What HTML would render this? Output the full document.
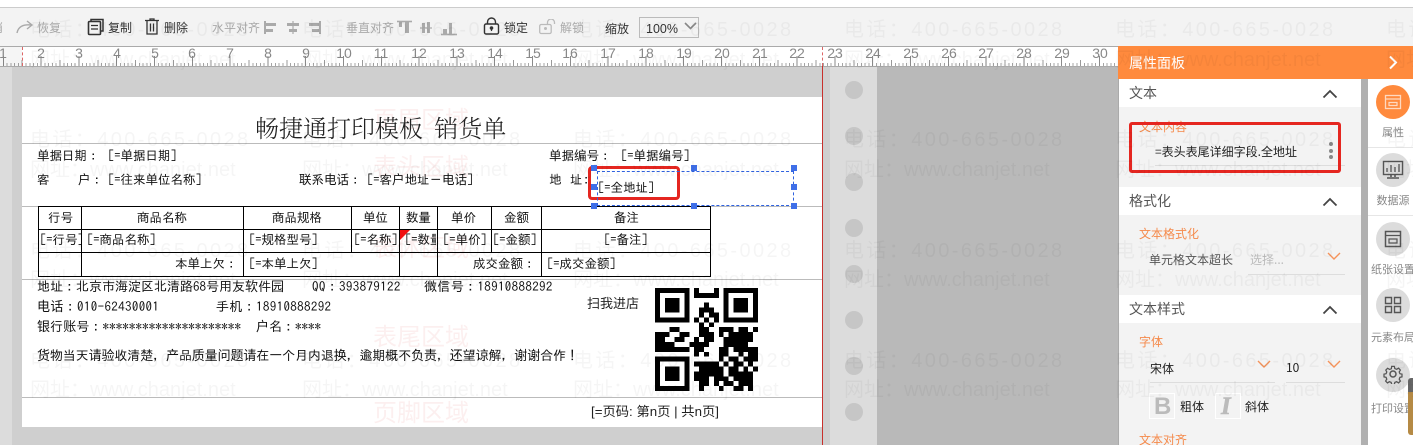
<!DOCTYPE html>
<html lang="zh"><head><meta charset="utf-8"><title>打印模板</title>
<style>
html,body{margin:0;padding:0;background:#fff}
#r{position:relative;width:1413px;height:445px;overflow:hidden;background:#fff;font-family:"Liberation Sans","Noto Sans CJK SC",sans-serif}
#r div,#r span.t,#r svg{position:absolute}
.t{position:absolute;white-space:pre;line-height:16px;font-size:12px}
.p{font-family:"IPAGothic","WenQuanYi Zen Hei","Noto Sans CJK SC",monospace;color:#111;font-size:12.5px}
.f{font-size:13px}
.d{letter-spacing:.35px}
.tb{font-size:12px;color:#333;font-family:"Noto Sans CJK SC",sans-serif}
.g{color:#aaa}
.n{font-size:14px;color:#888;width:24px;text-align:center;font-family:"Liberation Sans",sans-serif;top:45px}
.l{background:#bbb;height:1px;left:22px;width:800px}
.b{background:#000}
.h{background:#3f6fe8;width:6px;height:6px}
.w{font-size:20px;color:rgba(0,0,0,.04);letter-spacing:2.400px;line-height:24px;font-family:"Liberation Sans","Noto Sans CJK SC",sans-serif}
.s{letter-spacing:0}
.e{font-size:24px;color:rgba(215,50,50,.08);line-height:28px;font-family:"Noto Sans CJK SC",sans-serif}
.sh{font-size:14px;color:#555;font-family:"Noto Sans CJK SC",sans-serif}
.or{font-size:12px;color:#f58a4b;font-family:"Noto Sans CJK SC",sans-serif}
.pa{font-size:12px;color:#333;font-family:"Noto Sans CJK SC",sans-serif}
.sl{font-size:11px;color:#888;font-family:"Noto Sans CJK SC",sans-serif;text-align:center;width:60px;left:1363px}
.c{width:34px;height:34px;border-radius:50%;background:#dcdcdc;left:1376px}
</style></head><body><div id="r">

<div style="left:0;top:7px;width:1413px;height:1px;background:#ccc"></div>
<div style="left:0;top:8px;width:1413px;height:38px;background:#f3f3f3"></div>
<div style="left:0;top:46px;width:1118px;height:1px;background:#aaa"></div>

<span class="t tb g" style="left:-9px;top:20px">消</span>
<svg style="left:16px;top:20px" width="18" height="14" viewBox="0 0 18 14"><path d="M1 13C2 7 7 4 15 5M11 1l5 4-5 4" fill="none" stroke="#aaa" stroke-width="1.4"/></svg>
<span class="t tb g" style="left:37px;top:20px">恢复</span>
<svg style="left:87px;top:18px" width="18" height="18" viewBox="0 0 18 18"><path d="M4 3V1.500h12V13h-2" fill="none" stroke="#333" stroke-width="1.500"/><rect x="1.500" y="3.500" width="12" height="13" rx="1" fill="none" stroke="#333" stroke-width="1.600"/><path d="M4 7.500h7M4 11h7" stroke="#333" stroke-width="1.300"/></svg>
<span class="t tb" style="left:108px;top:20px">复制</span>
<svg style="left:144px;top:18px" width="16" height="17" viewBox="0 0 16 17"><path d="M1 2.500h14M3 3v13h10V3M6 2.500V1h4v1.500M6.500 5.500v8M9.500 5.500v8" fill="none" stroke="#333" stroke-width="1.300"/></svg>
<span class="t tb" style="left:164px;top:20px">删除</span>
<span class="t tb g" style="left:212px;top:20px">水平对齐</span>
<svg style="left:263px;top:20px" width="60" height="15" viewBox="0 0 60 15"><path d="M2 1v13" stroke="#aaa" stroke-width="2"/><path d="M3 3h10v3H3zM3 9h7v3H3z" fill="#aaa"/><path d="M30 1v13" stroke="#aaa" stroke-width="1.200"/><path d="M24 3h12v3H24zM26 9h8v3h-8z" fill="#aaa"/><path d="M57 1v13" stroke="#aaa" stroke-width="2"/><path d="M46 3h10v3H46zM49 9h7v3h-7z" fill="#aaa"/></svg>
<span class="t tb g" style="left:346px;top:20px">垂直对齐</span>
<svg style="left:396px;top:20px" width="62" height="16" viewBox="0 0 62 16"><path d="M1 1.500h15" stroke="#aaa" stroke-width="1.600"/><path d="M3 2h3v5H3zM9 2h4v11H9z" fill="#aaa"/><path d="M24 8h12" stroke="#aaa" stroke-width="1.200"/><path d="M26 3h3v10h-3zM31 2h3v11h-3z" fill="#aaa"/><path d="M45 14.500h16" stroke="#aaa" stroke-width="1.600"/><path d="M47 9h4v5h-4zM53 3h3v11h-3z" fill="#aaa"/></svg>
<svg style="left:483px;top:17px" width="17" height="18" viewBox="0 0 17 18"><rect x="1.500" y="7" width="14" height="10" rx="1.500" fill="none" stroke="#333" stroke-width="1.400"/><path d="M4.500 7V5a4 4 0 0 1 8 0v2" fill="none" stroke="#333" stroke-width="1.400"/><circle cx="8.500" cy="11" r="1.800" fill="#333"/><path d="M8.500 11v3" stroke="#333" stroke-width="1.200"/></svg>
<span class="t tb" style="left:504px;top:20px">锁定</span>
<svg style="left:539px;top:19px" width="18" height="16" viewBox="0 0 18 16"><rect x="0.700" y="5.500" width="11.500" height="9" rx="1.500" fill="none" stroke="#bbb" stroke-width="1.300"/><path d="M8.500 5V3.500a3.500 3.500 0 0 1 7 0V5" fill="none" stroke="#bbb" stroke-width="1.300"/><circle cx="6.500" cy="9.500" r="1.500" fill="#bbb"/></svg>
<span class="t tb g" style="left:560px;top:20px">解锁</span>
<span class="t tb" style="left:605px;top:21px">缩放</span>
<div style="left:639px;top:17px;width:58px;height:19px;border:1px solid #bbb;background:#f3f3f3"></div>
<span class="t" style="left:646px;top:21px;font-size:12.500px;color:#333">100%</span>
<svg style="left:684px;top:22px" width="13" height="8" viewBox="0 0 13 8"><path d="M1 1l5.500 5.500L12 1" fill="none" stroke="#888" stroke-width="1.600"/></svg>

<div style="left:0;top:47px;width:1118px;height:19px;background:#fff;overflow:hidden"><div style="left:-34.600px;top:0;width:1160px;height:19px;background-image:repeating-linear-gradient(90deg,#8a8a8a 0 1px,transparent 1px 37.800px),repeating-linear-gradient(90deg,#999 0 1px,transparent 1px 18.900px),repeating-linear-gradient(90deg,#a5a5a5 0 1px,transparent 1px 3.780px);background-repeat:no-repeat;background-size:100% 10px,100% 6px,100% 3px;background-position:0 100%,0 100%,0 100%"></div></div>
<div style="left:0;top:47px;width:22px;height:19px;background:rgba(0,0,0,.04)"></div>
<div style="left:0;top:66px;width:1118px;height:1px;background:#aaa"></div>
<span class="t n" style="left:-9px">1</span><span class="t n" style="left:29px">2</span><span class="t n" style="left:67px">3</span><span class="t n" style="left:105px">4</span><span class="t n" style="left:143px">5</span><span class="t n" style="left:180px">6</span><span class="t n" style="left:218px">7</span><span class="t n" style="left:256px">8</span><span class="t n" style="left:294px">9</span><span class="t n" style="left:332px">10</span><span class="t n" style="left:369px">11</span><span class="t n" style="left:407px">12</span><span class="t n" style="left:445px">13</span><span class="t n" style="left:483px">14</span><span class="t n" style="left:521px">15</span><span class="t n" style="left:558px">16</span><span class="t n" style="left:596px">17</span><span class="t n" style="left:634px">18</span><span class="t n" style="left:672px">19</span><span class="t n" style="left:710px">20</span><span class="t n" style="left:748px">21</span><span class="t n" style="left:785px">22</span><span class="t n" style="left:823px">23</span><span class="t n" style="left:861px">24</span><span class="t n" style="left:899px">25</span><span class="t n" style="left:937px">26</span><span class="t n" style="left:974px">27</span><span class="t n" style="left:1012px">28</span><span class="t n" style="left:1050px">29</span><span class="t n" style="left:1088px">30</span>
<div style="left:22px;top:47px;width:0;height:19px;border-left:1px dashed #d66"></div>
<div style="left:822px;top:47px;width:0;height:19px;border-left:1px dashed #d66"></div>

<div style="left:0;top:67px;width:12px;height:378px;background:#dcdcdc"></div>
<div style="left:12px;top:67px;width:811px;height:378px;background:#cfcfcf"></div>
<div style="left:823px;top:67px;width:7px;height:378px;background:#cfcfcf"></div>
<div style="left:830px;top:67px;width:47px;height:378px;background:#dcdcdc"></div>
<div style="left:877px;top:67px;width:241px;height:378px;background:#b9b9b9"></div>
<div style="left:845px;top:81px;width:18px;height:18px;border-radius:50%;background:#c6c6c6"></div>
<div style="left:845px;top:127px;width:18px;height:18px;border-radius:50%;background:#c6c6c6"></div>
<div style="left:845px;top:173px;width:18px;height:18px;border-radius:50%;background:#c6c6c6"></div>
<div style="left:845px;top:219px;width:18px;height:18px;border-radius:50%;background:#c6c6c6"></div>
<div style="left:845px;top:265px;width:18px;height:18px;border-radius:50%;background:#c6c6c6"></div>
<div style="left:845px;top:311px;width:18px;height:18px;border-radius:50%;background:#c6c6c6"></div>
<div style="left:845px;top:357px;width:18px;height:18px;border-radius:50%;background:#c6c6c6"></div>
<div style="left:845px;top:403px;width:18px;height:18px;border-radius:50%;background:#c6c6c6"></div>

<div style="left:22px;top:97px;width:800px;height:330px;background:#fff"></div>
<div style="left:822px;top:66px;width:1px;height:379px;background:#c8302c"></div>
<div class="l" style="top:143px"></div>
<div class="l" style="top:206px"></div>
<div class="l" style="top:279px"></div>
<div class="l" style="top:397px"></div>

<span class="t e" style="left:373px;top:104px">页眉区域</span>
<span class="t e" style="left:373px;top:151px">表头区域</span>
<span class="t e" style="left:373px;top:232px">表体区域</span>
<span class="t e" style="left:373px;top:321px">表尾区域</span>
<span class="t e" style="left:373px;top:397px">页脚区域</span>

<span class="t" style="left:255px;top:113px;font-size:24px;line-height:28px;color:#222;font-family:'Noto Serif CJK SC',serif;font-weight:300;word-spacing:5px">畅捷通打印模板 销货单</span>
<span class="t p" style="left:37px;top:148px">单据日期：</span><span class="t p" style="left:108px;top:148px">[=单据日期]</span>
<span class="t p" style="left:37px;top:172px">客</span><span class="t p" style="left:78px;top:172px">户：</span><span class="t p" style="left:108px;top:172px">[=往来单位名称]</span>
<span class="t p" style="left:299px;top:172px">联系电话：</span><span class="t p" style="left:367px;top:172px">[=客户地址－电话]</span>
<span class="t p" style="left:549px;top:148px">单据编号：</span><span class="t p" style="left:621px;top:148px">[=单据编号]</span>
<span class="t p" style="left:549px;top:172px">地</span><span class="t p" style="left:570px;top:172px">址</span><span class="t p" style="left:583px;top:172px">:</span>
<span class="t p" style="left:598px;top:180px">[=全地址]</span>

<div class="b" style="left:38px;top:206px;width:673px;height:1px"></div>
<div class="b" style="left:38px;top:229px;width:673px;height:1px"></div>
<div class="b" style="left:38px;top:252px;width:673px;height:1px"></div>
<div class="b" style="left:38px;top:276px;width:673px;height:1px"></div>
<div class="b" style="left:38px;top:206px;width:1px;height:71px"></div>
<div class="b" style="left:81px;top:206px;width:1px;height:71px"></div>
<div class="b" style="left:243px;top:206px;width:1px;height:71px"></div>
<div class="b" style="left:351px;top:206px;width:1px;height:47px"></div>
<div class="b" style="left:399px;top:206px;width:1px;height:71px"></div>
<div class="b" style="left:437px;top:206px;width:1px;height:71px"></div>
<div class="b" style="left:491px;top:206px;width:1px;height:47px"></div>
<div class="b" style="left:541px;top:206px;width:1px;height:71px"></div>
<div class="b" style="left:710px;top:206px;width:1px;height:71px"></div>
<svg style="left:400px;top:230px" width="10" height="10"><path d="M0 0h10L0 10z" fill="#f01010"/></svg>

<span class="t p" style="left:48px;top:210px">行号</span>
<span class="t p" style="left:137px;top:210px">商品名称</span>
<span class="t p" style="left:272px;top:210px">商品规格</span>
<span class="t p" style="left:363px;top:210px">单位</span>
<span class="t p" style="left:406px;top:210px">数量</span>
<span class="t p" style="left:451px;top:210px">单价</span>
<span class="t p" style="left:504px;top:210px">金额</span>
<span class="t p" style="left:614px;top:210px">备注</span>
<div style="left:39px;top:232px;width:42px;height:18px;overflow:hidden"><span class="t p" style="left:1px;top:0">[=行号]</span></div>
<span class="t p" style="left:87px;top:232px">[=商品名称]</span>
<span class="t p" style="left:249px;top:232px">[=规格型号]</span>
<span class="t p" style="left:354px;top:232px">[=名称]</span>
<div style="left:405px;top:232px;width:31px;height:18px;overflow:hidden"><span class="t p" style="left:0;top:0">[=数量]</span></div>
<span class="t p" style="left:443px;top:232px">[=单价]</span>
<span class="t p" style="left:493px;top:232px">[=金额]</span>
<span class="t p" style="left:604px;top:232px">[=备注]</span>
<span class="t p" style="left:175px;top:256px">本单上欠：</span>
<span class="t p" style="left:249px;top:256px">[=本单上欠]</span>
<span class="t p" style="left:473px;top:256px">成交金额：</span>
<span class="t p" style="left:547px;top:256px">[=成交金额]</span>

<span class="t p f" style="left:37px;top:279px">地址：北京市海淀区北清路68号用友软件园</span>
<span class="t p f d" style="left:312px;top:279px">QQ：393879122</span>
<span class="t p f d" style="left:424px;top:279px">微信号：18910888292</span>
<span class="t p f d" style="left:37px;top:299px">电话：010-62430001</span>
<span class="t p f d" style="left:216px;top:299px">手机：18910888292</span>
<span class="t p f" style="left:37px;top:319px;letter-spacing:.1px">银行账号：*********************</span>
<span class="t p f" style="left:256px;top:319px">户名：****</span>
<span class="t p f" style="left:37px;top:348px;letter-spacing:-.1px">货物当天请验收清楚，产品质量问题请在一个月内退换，逾期概不负责，还望谅解，谢谢合作！</span>
<span class="t" style="left:587px;top:295px;font-size:13px;color:#222;font-family:'Noto Sans CJK SC',sans-serif">扫我进店</span>
<span class="t" style="left:591px;top:404px;font-size:13.300px;color:#222;font-family:'Liberation Sans','Noto Sans CJK SC',sans-serif">[=页码: 第n页 | 共n页]</span>

<svg style="left:655px;top:288px" width="103" height="103" viewBox="0 0 21 21" shape-rendering="crispEdges"><path fill="#000" d="M0 0h7v7H0zM1 1v5h5V1zM2 2h3v3H2zM14 0h7v7h-7zM15 1v5h5V1zM16 2h3v3h-3zM0 14h7v7H0zM1 15v5h5v-5zM2 16h3v3H2z" fill-rule="evenodd"/><path fill="#000" d="M8 0h1v2H8zM12 0h1v2h-1zM9 1h3v1H9zM10 3h1v1h-1zM9 4h3v1H9zM9 5h1v1H9zM11 5h2v1h-2zM8 6h1v1H8zM10 6h1v1h-1zM12 6h1v1h-1zM9 7h1v1H9zM11 7h1v1h-1zM3 8h2v1H3zM9 8h2v1H9zM13 8h3v1h-3zM17 8h2v1h-2zM20 8h1v1h-1zM0 9h3v1H0zM5 9h2v1H5zM9 9h3v1H9zM13 9h1v1h-1zM15 9h2v1h-2zM17 9h3v1h-3zM0 10h2v1H0zM4 10h2v1H4zM8 10h1v1H8zM10 10h2v1h-2zM14 10h2v1h-2zM16 10h4v1h-4zM0 11h4v1H0zM7 11h4v1H7zM14 11h1v1h-1zM15 11h4v1h-4zM0 12h7v1H0zM8 12h2v1H8zM13 12h2v1h-2zM16 12h5v1h-5zM8 13h1v1H8zM10 13h1v1h-1zM13 13h2v1h-2zM17 13h1v1h-1zM19 13h2v1h-2zM13 14h1v1h-1zM15 14h2v1h-2zM18 14h3v1h-3zM8 15h5v1H8zM14 15h1v1h-1zM16 15h2v1h-2zM19 15h1v1h-1zM9 16h5v1H9zM15 16h2v1h-2zM18 16h1v1h-1zM20 16h1v1h-1zM8 17h6v1H8zM15 17h4v1h-4zM19 17h1v1h-1zM8 18h3v1H8zM12 18h3v1h-3zM16 18h4v1h-4zM9 19h2v1H9zM12 19h1v1h-1zM14 19h2v1h-2zM17 19h3v1h-3zM9 20h1v1H9zM13 20h1v1h-1zM16 20h2v1h-2zM19 20h1v1h-1z"/></svg>

<div style="left:588px;top:166px;width:86px;height:28px;border:3px solid #e52620;border-radius:4px"></div>
<div style="left:597px;top:171px;width:195px;height:33px;border:1px dashed #2f62e0"></div>
<div class="h" style="left:591px;top:165px"></div><div class="h" style="left:691px;top:165px"></div><div class="h" style="left:791px;top:165px"></div>
<div class="h" style="left:591px;top:184px"></div><div class="h" style="left:791px;top:184px"></div>
<div class="h" style="left:591px;top:203px"></div><div class="h" style="left:691px;top:203px"></div><div class="h" style="left:791px;top:203px"></div>

<div style="left:1118px;top:46px;width:295px;height:33px;background:#ff8a3d"></div>
<span class="t" style="left:1129px;top:55px;font-size:14px;color:#fff;font-family:'Noto Sans CJK SC',sans-serif">属性面板</span>
<svg style="left:1388px;top:55px" width="10" height="15" viewBox="0 0 10 15"><path d="M2 1.500l6 6-6 6" fill="none" stroke="#fff" stroke-width="2"/></svg>
<div style="left:1118px;top:79px;width:1px;height:366px;background:#aaa"></div>
<div style="left:1119px;top:79px;width:242px;height:366px;background:#f3f3f3"></div>
<div style="left:1119px;top:79px;width:242px;height:28px;background:#fff"></div>
<div style="left:1119px;top:187px;width:242px;height:28px;background:#fff"></div>
<div style="left:1119px;top:295px;width:242px;height:28px;background:#fff"></div>
<div style="left:1361px;top:79px;width:7px;height:366px;background:#b0b0b0"></div>
<div style="left:1368px;top:79px;width:45px;height:366px;background:#fff"></div>

<span class="t sh" style="left:1129px;top:85px">文本</span>
<span class="t sh" style="left:1129px;top:193px">格式化</span>
<span class="t sh" style="left:1129px;top:301px">文本样式</span>
<svg style="left:1322px;top:89px" width="16" height="10" viewBox="0 0 16 10"><path d="M1.500 8.500L8 2l6.500 6.500" fill="none" stroke="#444" stroke-width="1.800"/></svg>
<svg style="left:1322px;top:197px" width="16" height="10" viewBox="0 0 16 10"><path d="M1.500 8.500L8 2l6.500 6.500" fill="none" stroke="#444" stroke-width="1.800"/></svg>
<svg style="left:1322px;top:305px" width="16" height="10" viewBox="0 0 16 10"><path d="M1.500 8.500L8 2l6.500 6.500" fill="none" stroke="#444" stroke-width="1.800"/></svg>

<span class="t or" style="left:1139px;top:119px">文本内容</span>
<span class="t pa" style="left:1155px;top:144px;color:#222">=表头表尾详细字段.全地址</span>
<div style="left:1155px;top:165px;width:190px;height:1px;background:#ddd"></div>
<div style="left:1329px;top:142px;width:4px;height:4px;border-radius:50%;background:#888"></div>
<div style="left:1329px;top:149px;width:4px;height:4px;border-radius:50%;background:#888"></div>
<div style="left:1329px;top:155px;width:4px;height:4px;border-radius:50%;background:#888"></div>
<div style="left:1129px;top:122px;width:206px;height:45px;border:3px solid #e52620;border-radius:3px"></div>

<span class="t or" style="left:1139px;top:226px">文本格式化</span>
<span class="t pa" style="left:1149px;top:252px;color:#555">单元格文本超长</span>
<span class="t pa" style="left:1250px;top:252px;color:#bbb">选择...</span>
<svg style="left:1327px;top:252px" width="14" height="9" viewBox="0 0 14 9"><path d="M1 1l6 6 6-6" fill="none" stroke="#f5935a" stroke-width="1.400"/></svg>
<div style="left:1248px;top:274px;width:97px;height:1px;background:#ddd"></div>

<span class="t or" style="left:1139px;top:334px">字体</span>
<span class="t pa" style="left:1150px;top:361px;color:#222">宋体</span>
<svg style="left:1257px;top:360px" width="14" height="9" viewBox="0 0 14 9"><path d="M1 1l6 6 6-6" fill="none" stroke="#f5935a" stroke-width="1.400"/></svg>
<span class="t pa" style="left:1286px;top:360px;color:#222">10</span>
<svg style="left:1327px;top:360px" width="14" height="9" viewBox="0 0 14 9"><path d="M1 1l6 6 6-6" fill="none" stroke="#f5935a" stroke-width="1.400"/></svg>
<div style="left:1150px;top:382px;width:125px;height:1px;background:#ddd"></div>
<div style="left:1286px;top:382px;width:59px;height:1px;background:#ddd"></div>
<div style="left:1149px;top:393px;width:24px;height:24px;border:1px solid #fff"></div>
<span class="t" style="left:1154px;top:395px;font-size:24px;line-height:24px;font-weight:bold;color:#bbb">B</span>
<span class="t pa" style="left:1180px;top:399px;color:#222">粗体</span>
<div style="left:1215px;top:393px;width:24px;height:24px;border:1px solid #fff"></div>
<span class="t" style="left:1221px;top:395px;font-size:25px;line-height:24px;font-weight:bold;font-style:italic;font-family:'Liberation Serif',serif;color:#bbb;-webkit-text-stroke:.6px #bbb">I</span>
<span class="t pa" style="left:1245px;top:399px;color:#222">斜体</span>
<span class="t or" style="left:1139px;top:432px">文本对齐</span>

<div class="c" style="top:85px;background:#ff8a3d"></div>
<svg style="left:1384px;top:93px" width="18" height="18" viewBox="0 0 18 18"><rect x="1.500" y="2.500" width="15" height="13" fill="none" stroke="#ffd9c0" stroke-width="1.300"/><path d="M1.500 6h15M5 9.500h8v3H5z" fill="none" stroke="#ffd9c0" stroke-width="1.200"/></svg>
<span class="t sl" style="top:124px">属性</span>
<div style="left:1368px;top:147px;width:45px;height:1px;background:#e6e6e6"></div>
<div class="c" style="top:153px"></div>
<svg style="left:1382px;top:160px" width="22" height="20" viewBox="0 0 22 20"><rect x="1.500" y="1.500" width="19" height="13" fill="none" stroke="#555" stroke-width="1.400"/><path d="M5 12V8M9 12V5M13 12V7M17 12V4" stroke="#555" stroke-width="1.300"/><path d="M9 15v2M13 15v2M5 18h12" stroke="#555" stroke-width="1.600"/></svg>
<span class="t sl" style="top:192px">数据源</span>
<div style="left:1368px;top:215px;width:45px;height:1px;background:#e6e6e6"></div>
<div class="c" style="top:222px"></div>
<svg style="left:1384px;top:230px" width="18" height="18" viewBox="0 0 18 18"><rect x="1.500" y="1.500" width="15" height="15" fill="none" stroke="#555" stroke-width="1.500"/><path d="M1.500 5.500h15M5 9h8v4H5z" fill="none" stroke="#555" stroke-width="1.200"/></svg>
<span class="t sl" style="top:261px">纸张设置</span>
<div class="c" style="top:288px"></div>
<svg style="left:1384px;top:296px" width="18" height="18" viewBox="0 0 18 18"><path d="M1.500 1.500h6v6h-6zM10.500 1.500h6v6h-6zM1.500 10.500h6v6h-6zM10.500 10.500h6v6h-6z" fill="none" stroke="#555" stroke-width="1.400"/></svg>
<span class="t sl" style="top:329px">元素布局</span>
<div class="c" style="top:358px"></div>
<svg style="left:1383px;top:364px" width="20" height="20" viewBox="0 0 20 20"><circle cx="10" cy="10" r="3" fill="none" stroke="#555" stroke-width="1.500"/><path d="M8.500 1.500h3l.5 2.500 2 .8 2.200-1.300 2 2.100-1.300 2.100.8 2 2.300.5v3l-2.300.5-.8 2 1.300 2.100-2 2.100-2.200-1.300-2 .8-.5 2.300h-3l-.5-2.300-2-.8-2.200 1.300-2-2.100 1.300-2.100-.8-2-2.300-.5v-3l2.300-.5.8-2L2 5.700l2-2.100 2.200 1.300 2-.8z" fill="none" stroke="#555" stroke-width="1.400" transform="translate(1 1) scale(.9)"/></svg>
<span class="t sl" style="top:400px">打印设置</span>
<div style="left:1408px;top:378px;width:5px;height:57px;border-radius:3px 0 0 3px;background:linear-gradient(#666 0 25%,#b58a45 25% 100%)"></div>

<span class="t w" style="left:30px;top:18px">电话：400-665-0028</span><span class="t w" style="left:302px;top:18px">电话：400-665-0028</span><span class="t w" style="left:573px;top:18px">电话：400-665-0028</span><span class="t w" style="left:844px;top:18px">电话：400-665-0028</span><span class="t w" style="left:1115px;top:18px">电话：400-665-0028</span><span class="t w" style="left:1386px;top:18px">电话：400-665-0028</span>
<span class="t w s" style="left:30px;top:48px">网址：www.chanjet.net</span><span class="t w s" style="left:302px;top:48px">网址：www.chanjet.net</span><span class="t w s" style="left:573px;top:48px">网址：www.chanjet.net</span><span class="t w s" style="left:844px;top:48px">网址：www.chanjet.net</span><span class="t w s" style="left:1115px;top:48px">网址：www.chanjet.net</span><span class="t w s" style="left:1386px;top:48px">网址：www.chanjet.net</span>
<span class="t w" style="left:30px;top:128px">电话：400-665-0028</span><span class="t w" style="left:302px;top:128px">电话：400-665-0028</span><span class="t w" style="left:573px;top:128px">电话：400-665-0028</span><span class="t w" style="left:844px;top:128px">电话：400-665-0028</span><span class="t w" style="left:1115px;top:128px">电话：400-665-0028</span><span class="t w" style="left:1386px;top:128px">电话：400-665-0028</span>
<span class="t w s" style="left:30px;top:158px">网址：www.chanjet.net</span><span class="t w s" style="left:302px;top:158px">网址：www.chanjet.net</span><span class="t w s" style="left:573px;top:158px">网址：www.chanjet.net</span><span class="t w s" style="left:844px;top:158px">网址：www.chanjet.net</span><span class="t w s" style="left:1115px;top:158px">网址：www.chanjet.net</span><span class="t w s" style="left:1386px;top:158px">网址：www.chanjet.net</span>
<span class="t w" style="left:30px;top:239px">电话：400-665-0028</span><span class="t w" style="left:302px;top:239px">电话：400-665-0028</span><span class="t w" style="left:573px;top:239px">电话：400-665-0028</span><span class="t w" style="left:844px;top:239px">电话：400-665-0028</span><span class="t w" style="left:1115px;top:239px">电话：400-665-0028</span><span class="t w" style="left:1386px;top:239px">电话：400-665-0028</span>
<span class="t w s" style="left:30px;top:268px">网址：www.chanjet.net</span><span class="t w s" style="left:302px;top:268px">网址：www.chanjet.net</span><span class="t w s" style="left:573px;top:268px">网址：www.chanjet.net</span><span class="t w s" style="left:844px;top:268px">网址：www.chanjet.net</span><span class="t w s" style="left:1115px;top:268px">网址：www.chanjet.net</span><span class="t w s" style="left:1386px;top:268px">网址：www.chanjet.net</span>
<span class="t w" style="left:30px;top:349px">电话：400-665-0028</span><span class="t w" style="left:302px;top:349px">电话：400-665-0028</span><span class="t w" style="left:573px;top:349px">电话：400-665-0028</span><span class="t w" style="left:844px;top:349px">电话：400-665-0028</span><span class="t w" style="left:1115px;top:349px">电话：400-665-0028</span><span class="t w" style="left:1386px;top:349px">电话：400-665-0028</span>
<span class="t w s" style="left:30px;top:378px">网址：www.chanjet.net</span><span class="t w s" style="left:302px;top:378px">网址：www.chanjet.net</span><span class="t w s" style="left:573px;top:378px">网址：www.chanjet.net</span><span class="t w s" style="left:844px;top:378px">网址：www.chanjet.net</span><span class="t w s" style="left:1115px;top:378px">网址：www.chanjet.net</span><span class="t w s" style="left:1386px;top:378px">网址：www.chanjet.net</span>
</div></body></html>
